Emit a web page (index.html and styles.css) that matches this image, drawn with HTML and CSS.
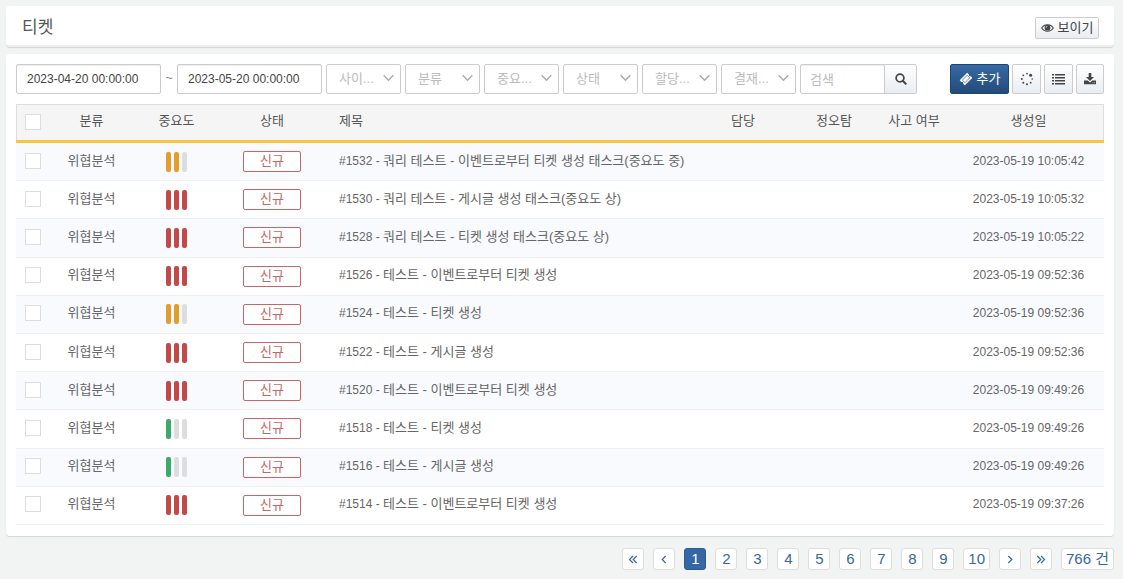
FILE: index.html
```html
<!DOCTYPE html>
<html lang="ko">
<head>
<meta charset="utf-8">
<meta name="viewport" content="width=device-width, initial-scale=1">
<title>티켓</title>
<link rel="stylesheet" href="styles.css">
</head>
<body>
<svg class="defs" width="0" height="0" aria-hidden="true">
  <symbol id="chevron" viewBox="0 0 11 8"><path d="M.7 1.200 5.500 6.200 10.300 1.200" fill="none" stroke="currentColor" stroke-width="1.400"/></symbol>
</svg>
<header class="panel title-bar">
  <h1 class="title">티켓</h1>
  <button class="btn btn-small" type="button">
    <svg width="13" height="10" viewBox="0 0 13 10" aria-hidden="true"><path d="M.7 5C3.300.7 9.700.7 12.300 5 9.700 9.300 3.300 9.300.7 5Z" fill="none" stroke="currentColor" stroke-width="1.100"/><circle cx="6.500" cy="4.700" r="2.900" fill="currentColor"/><path d="M5 4.700Q5 3.300 6.500 3.200" fill="none" stroke="#fff" stroke-width=".7"/></svg>
    <span>보이기</span>
  </button>
</header>

<main class="panel content">
  <form class="toolbar">
    <div class="filters">
      <div class="range">
        <input class="field date" type="text" value="2023-04-20 00:00:00" aria-label="시작 시각">
        <span class="tilde">~</span>
        <input class="field date" type="text" value="2023-05-20 00:00:00" aria-label="종료 시각">
      </div>
      <div class="pick"><select class="field" aria-label="사이트"><option>사이...</option></select><svg class="arrow" aria-hidden="true"><use href="#chevron"/></svg></div>
      <div class="pick"><select class="field" aria-label="분류"><option>분류</option></select><svg class="arrow" aria-hidden="true"><use href="#chevron"/></svg></div>
      <div class="pick"><select class="field" aria-label="중요도"><option>중요...</option></select><svg class="arrow" aria-hidden="true"><use href="#chevron"/></svg></div>
      <div class="pick"><select class="field" aria-label="상태"><option>상태</option></select><svg class="arrow" aria-hidden="true"><use href="#chevron"/></svg></div>
      <div class="pick"><select class="field" aria-label="할당"><option>할당...</option></select><svg class="arrow" aria-hidden="true"><use href="#chevron"/></svg></div>
      <div class="pick"><select class="field" aria-label="결재"><option>결재...</option></select><svg class="arrow" aria-hidden="true"><use href="#chevron"/></svg></div>
      <div class="search">
        <input class="field" type="text" placeholder="검색" aria-label="검색">
        <button class="btn" type="button" aria-label="검색 실행"><svg width="12" height="12" viewBox="0 0 12 12" aria-hidden="true"><circle cx="5" cy="5" r="3.900" fill="none" stroke="currentColor" stroke-width="1.700"/><path d="m7.800 7.800 2.900 2.900" stroke="currentColor" stroke-width="2" stroke-linecap="round"/></svg></button>
      </div>
    </div>
    <div class="actions">
      <button class="btn btn-primary" type="button">
        <svg width="14" height="14" viewBox="0 0 14 14" aria-hidden="true"><path fill="currentColor" fill-rule="evenodd" d="M8.200.7 9.900 2.400A1.500 1.500 0 0 0 11.800 4.300L13.300 5.900 5.800 13.300 4.200 11.800A1.500 1.500 0 0 0 2.300 9.900L.7 8.300Z"/><path d="M8.200 3.300 10.700 5.800 5.900 10.600 3.400 8.100Z" fill="none" stroke="#2d5a8f" stroke-width=".7"/></svg>
        <span>추가</span>
      </button>
      <button class="btn" type="button" aria-label="새로고침"><svg width="14" height="14" viewBox="0 0 14 14" fill="currentColor" aria-hidden="true"><circle cx="7" cy="1.600" r=".9"/><circle cx="10.600" cy="3.200" r="1.500"/><circle cx="12.200" cy="7" r=".8"/><circle cx="10.700" cy="10.700" r=".9"/><circle cx="7" cy="12.300" r="1"/><circle cx="3.300" cy="10.700" r="1"/><circle cx="1.800" cy="7" r="1"/><circle cx="3.300" cy="3.300" r=".9"/></svg></button>
      <button class="btn" type="button" aria-label="목록"><svg width="13" height="12" viewBox="0 0 13 12" fill="currentColor" aria-hidden="true"><path d="M0 1h2v1.500H0zM3 1h10v1.500H3zM0 4h2v1.500H0zM3 4h10v1.500H3zM0 7h2v1.500H0zM3 7h10v1.500H3zM0 10h2v1.500H0zM3 10h10v1.500H3z"/></svg></button>
      <button class="btn btn-last" type="button" aria-label="내려받기"><svg width="12" height="12" viewBox="0 0 12 12" fill="currentColor" aria-hidden="true"><path d="M4.700 0h2.600v4H10L6 8 2 4h2.700z"/><path fill-rule="evenodd" d="M0 7.500h3.700L6 9.600l2.300-2.100H12v3.800H0zM8.500 9.500v.8h.8v-.8zM10.200 9.500v.8h.8v-.8z"/></svg></button>
    </div>
  </form>

  <table class="tickets">
    <colgroup><col class="c-check"><col class="c-type"><col class="c-level"><col class="c-state"><col><col class="c-owner"><col class="c-verdict"><col class="c-incident"><col class="c-date"></colgroup>
    <thead>
      <tr><th><input class="check" type="checkbox" aria-label="전체 선택"></th><th>분류</th><th>중요도</th><th>상태</th><th class="subject">제목</th><th>담당</th><th>정오탐</th><th>사고 여부</th><th>생성일</th></tr>
    </thead>
    <tbody>
      <tr><td><input class="check" type="checkbox" aria-label="1532 선택"></td><td>위협분석</td><td class="mark"><span class="level mid"><i></i><i></i><i></i></span></td><td class="mark"><span class="badge">신규</span></td><td class="subject"><span class="num">#1532 - </span>쿼리 테스트 - 이벤트로부터 티켓 생성 태스크(중요도 중)</td><td></td><td></td><td></td><td class="num">2023-05-19 10:05:42</td></tr>
      <tr><td><input class="check" type="checkbox" aria-label="1530 선택"></td><td>위협분석</td><td class="mark"><span class="level high"><i></i><i></i><i></i></span></td><td class="mark"><span class="badge">신규</span></td><td class="subject"><span class="num">#1530 - </span>쿼리 테스트 - 게시글 생성 태스크(중요도 상)</td><td></td><td></td><td></td><td class="num">2023-05-19 10:05:32</td></tr>
      <tr><td><input class="check" type="checkbox" aria-label="1528 선택"></td><td>위협분석</td><td class="mark"><span class="level high"><i></i><i></i><i></i></span></td><td class="mark"><span class="badge">신규</span></td><td class="subject"><span class="num">#1528 - </span>쿼리 테스트 - 티켓 생성 태스크(중요도 상)</td><td></td><td></td><td></td><td class="num">2023-05-19 10:05:22</td></tr>
      <tr><td><input class="check" type="checkbox" aria-label="1526 선택"></td><td>위협분석</td><td class="mark"><span class="level high"><i></i><i></i><i></i></span></td><td class="mark"><span class="badge">신규</span></td><td class="subject"><span class="num">#1526 - </span>테스트 - 이벤트로부터 티켓 생성</td><td></td><td></td><td></td><td class="num">2023-05-19 09:52:36</td></tr>
      <tr><td><input class="check" type="checkbox" aria-label="1524 선택"></td><td>위협분석</td><td class="mark"><span class="level mid"><i></i><i></i><i></i></span></td><td class="mark"><span class="badge">신규</span></td><td class="subject"><span class="num">#1524 - </span>테스트 - 티켓 생성</td><td></td><td></td><td></td><td class="num">2023-05-19 09:52:36</td></tr>
      <tr><td><input class="check" type="checkbox" aria-label="1522 선택"></td><td>위협분석</td><td class="mark"><span class="level high"><i></i><i></i><i></i></span></td><td class="mark"><span class="badge">신규</span></td><td class="subject"><span class="num">#1522 - </span>테스트 - 게시글 생성</td><td></td><td></td><td></td><td class="num">2023-05-19 09:52:36</td></tr>
      <tr><td><input class="check" type="checkbox" aria-label="1520 선택"></td><td>위협분석</td><td class="mark"><span class="level high"><i></i><i></i><i></i></span></td><td class="mark"><span class="badge">신규</span></td><td class="subject"><span class="num">#1520 - </span>테스트 - 이벤트로부터 티켓 생성</td><td></td><td></td><td></td><td class="num">2023-05-19 09:49:26</td></tr>
      <tr><td><input class="check" type="checkbox" aria-label="1518 선택"></td><td>위협분석</td><td class="mark"><span class="level low"><i></i><i></i><i></i></span></td><td class="mark"><span class="badge">신규</span></td><td class="subject"><span class="num">#1518 - </span>테스트 - 티켓 생성</td><td></td><td></td><td></td><td class="num">2023-05-19 09:49:26</td></tr>
      <tr><td><input class="check" type="checkbox" aria-label="1516 선택"></td><td>위협분석</td><td class="mark"><span class="level low"><i></i><i></i><i></i></span></td><td class="mark"><span class="badge">신규</span></td><td class="subject"><span class="num">#1516 - </span>테스트 - 게시글 생성</td><td></td><td></td><td></td><td class="num">2023-05-19 09:49:26</td></tr>
      <tr><td><input class="check" type="checkbox" aria-label="1514 선택"></td><td>위협분석</td><td class="mark"><span class="level high"><i></i><i></i><i></i></span></td><td class="mark"><span class="badge">신규</span></td><td class="subject"><span class="num">#1514 - </span>테스트 - 이벤트로부터 티켓 생성</td><td></td><td></td><td></td><td class="num">2023-05-19 09:37:26</td></tr>
    </tbody>
  </table>
</main>

<nav class="pager" aria-label="페이지">
  <a href="#" aria-label="처음"><svg width="10" height="10" viewBox="0 0 10 10" aria-hidden="true"><path d="M5 2 1.500 5.500 5 9M8.700 2 5.200 5.500 8.700 9"/></svg></a>
  <a href="#" aria-label="이전"><svg width="10" height="10" viewBox="0 0 10 10" aria-hidden="true"><path d="M6.700 2 3.200 5.500 6.700 9"/></svg></a>
  <a href="#" class="current" aria-current="page">1</a>
  <a href="#">2</a>
  <a href="#">3</a>
  <a href="#">4</a>
  <a href="#">5</a>
  <a href="#">6</a>
  <a href="#">7</a>
  <a href="#">8</a>
  <a href="#">9</a>
  <a href="#">10</a>
  <a href="#" aria-label="다음"><svg width="10" height="10" viewBox="0 0 10 10" aria-hidden="true"><path d="M3.300 2 6.800 5.500 3.300 9"/></svg></a>
  <a href="#" aria-label="마지막"><svg width="10" height="10" viewBox="0 0 10 10" aria-hidden="true"><path d="M1.300 2 4.800 5.500 1.300 9M5 2 8.500 5.500 5 9"/></svg></a>
  <span class="total">766 건</span>
</nav>
</body>
</html>
```
FILE: styles.css
```css
* { box-sizing: border-box; }

body {
  margin: 0;
  padding: 6px 9px 6px 6px;
  background: #f2f4f3;
  color: #555;
  font-family: "Liberation Sans", "Noto Sans CJK KR", sans-serif;
  font-size: 13px;
  line-height: 20px;
}

.defs { position: absolute; }

.panel {
  background: #fff;
  border-radius: 4px;
  box-shadow: 0 1px 1px #d4d6d6;
}

.title-bar {
  display: flex;
  align-items: center;
  justify-content: space-between;
  min-height: 41px;
  padding: 4px 15px 0 16px;
  border-bottom: 2px solid #eee;
}

.title {
  margin: 0;
  font-size: 17px;
  font-weight: 400;
}

.content {
  margin-top: 7px;
  padding: 10px 10px 11px;
}

.toolbar,
.filters,
.range,
.actions,
.search,
.pager { display: flex; }

.toolbar {
  justify-content: space-between;
  margin: 0 0 10px;
}

.filters { gap: 4px; }
.actions { gap: 3px; }

.field {
  height: 30px;
  padding: 0 9px;
  border: 1px solid #ccc;
  border-radius: 2px;
  background: #fff;
  color: #444;
  font: inherit;
  box-shadow: inset 0 1px 1px #eee;
}

.field::placeholder {
  color: #bbb;
  opacity: 1;
}

.date {
  width: 145px;
  padding: 0 10px;
  font-size: 12px;
}

.tilde {
  width: 16px;
  color: #888;
  line-height: 28px;
  text-align: center;
}

.pick {
  position: relative;
  width: 75px;
}

.pick .field {
  width: 100%;
  padding: 0 12px;
  appearance: none;
  color: #bbb;
  box-shadow: none;
}

.arrow {
  position: absolute;
  top: 10px;
  right: 7px;
  width: 11px;
  height: 8px;
  color: #aaa;
  pointer-events: none;
}

.search .field {
  width: 85px;
  border-radius: 2px 0 0 2px;
}

.search .btn {
  width: 33px;
  margin-left: -1px;
  border-radius: 0 2px 2px 0;
}

.btn {
  display: flex;
  align-items: center;
  justify-content: center;
  gap: 4px;
  width: 29px;
  height: 30px;
  padding: 0;
  border: 1px solid #ccc;
  border-radius: 2px;
  background: linear-gradient(#fff, #e9edf1);
  color: #444;
  font: inherit;
}

.btn-last { width: 28px; }

.btn-small {
  width: 64px;
  height: 22px;
}

.btn-primary {
  width: 59px;
  border-color: #1f4673;
  background: linear-gradient(#3769a5, #234b79);
  color: #fff;
}

.tickets {
  width: 100%;
  height: 421px;
  border-collapse: separate;
  border-spacing: 0;
  table-layout: fixed;
}

.c-check { width: 34px; }
.c-type { width: 83px; }
.c-level { width: 87px; }
.c-state { width: 104px; }
.c-owner { width: 100px; }
.c-verdict { width: 82px; }
.c-incident { width: 78px; }
.c-date { width: 151px; }

.tickets th {
  height: 39px;
  padding: 0 0 3px;
  border-top: 1px solid #ddd;
  border-bottom: 3px solid #fbc53d;
  background: #f5f5f5;
  font-weight: 400;
}

.tickets th:first-child {
  padding-bottom: 1px;
  box-shadow: inset 1px 0 #ddd;
}

.tickets th:last-child { box-shadow: inset -1px 0 #ddd; }

.tickets td {
  height: 38px;
  padding: 0 0 2px;
  border-bottom: 1px solid #eff0f2;
  color: #666;
  text-align: center;
}

.tickets .mark { padding: 0; }

.tickets tbody tr:nth-child(odd) { background: #f9fafe; }

.tickets .subject {
  padding-left: 15px;
  text-align: left;
}

.tickets .num { font-size: 12px; }

.check {
  display: block;
  width: 16px;
  height: 16px;
  margin: 0 auto;
  appearance: none;
  border: 1px solid #ddd;
  background: #fff;
}

.level {
  display: flex;
  justify-content: center;
  gap: 3px;
}

.level i {
  width: 5px;
  height: 20px;
  border-radius: 2px;
  background: #ddd;
}

.high i { background: #c04a4a; }
.mid i:nth-child(-n+2) { background: #e29d2a; }
.low i:first-child { background: #38ab69; }

.badge {
  display: block;
  width: 58px;
  margin: 0 auto;
  padding-bottom: 2px;
  border: 1px solid #ca6565;
  border-radius: 2px;
  background: #fff;
  color: #ca6565;
  line-height: 17px;
}

.pager {
  justify-content: flex-end;
  gap: 9px;
  margin-top: 12px;
  font-size: 15px;
}

.pager > * {
  display: flex;
  align-items: center;
  justify-content: center;
  min-width: 22px;
  height: 22px;
  padding: 0 4px;
  border: 1px solid #ddd;
  border-radius: 3px;
  background: #fff;
  color: #3567a5;
  text-decoration: none;
}

.pager .current {
  border-color: #2c5c96;
  background: #3567a5;
  color: #fff;
}

.pager svg {
  flex: none;
  fill: none;
  stroke: currentColor;
  stroke-width: 1.2;
}
```
